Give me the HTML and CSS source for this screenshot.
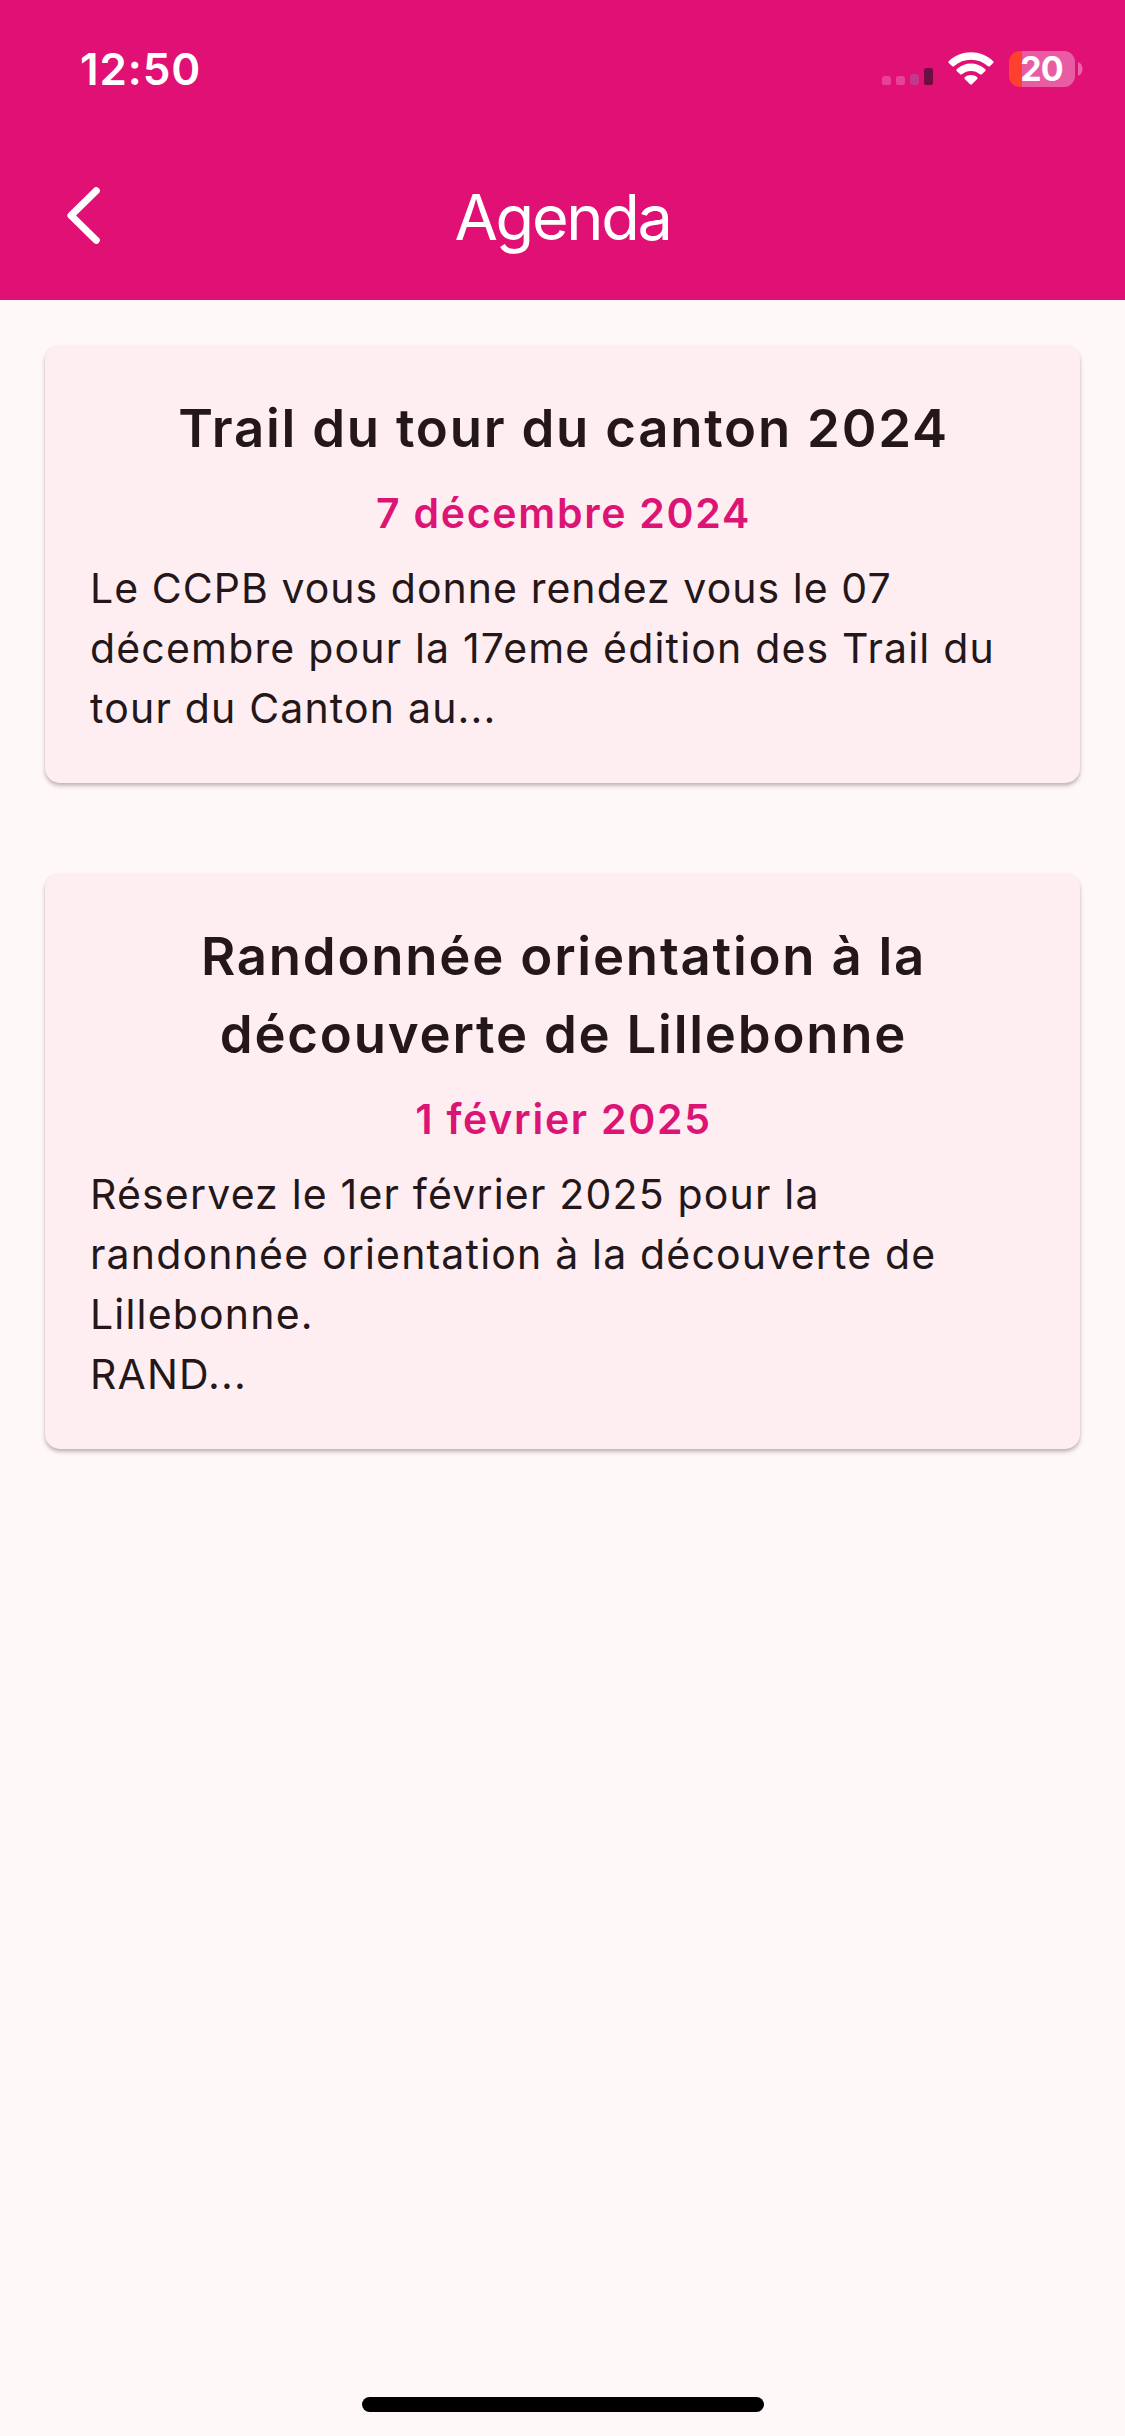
FILE: index.html
```
<!DOCTYPE html>
<html lang="fr">
<head>
<meta charset="utf-8">
<title>Agenda</title>
<link rel="stylesheet" href="styles.css">
</head>
<body>
<div class="screen">
  <header class="header">
    <div class="status">
      <span class="time">12:50</span>
      <div class="indicators">
        <svg class="signal" width="52" height="18" viewBox="0 0 52 18">
          <rect x="0" y="8" width="9" height="9" rx="2.6" fill="#ea409a"/>
          <rect x="14" y="8" width="9" height="9" rx="2.6" fill="#ea409a"/>
          <rect x="28" y="6" width="9" height="11" rx="3" fill="#c4388b"/>
          <rect x="42" y="0" width="9" height="17" rx="2.6" fill="#6b0f43"/>
        </svg>
        <svg class="wifi" width="46" height="34" viewBox="0 0 46 34" fill="#fff">
          <path d="M0.8 9.2Q0 10 .8 10.9L4.2 14.2Q5 15 5.9 14.2C15.5 5.6 30.500 5.600 40.100 14.200Q41 15 41.800 14.200L45.200 10.900Q46 10 45.200 9.200C32.800 -2.600 13.200 -2.600 .8 9.200Z"/>
          <path d="M8.700 17.200Q7.900 18 8.700 18.900L12.200 22.300Q13 23 13.900 22.300C19.200 17.800 26.800 17.800 32.100 22.300Q33 23 33.800 22.300L37.300 18.900Q38.100 18 37.300 17.200C29.200 9.500 16.800 9.500 8.700 17.200Z"/>
          <path d="M16.700 25.200Q16 26 16.700 26.900L22.100 32.300Q23 33.100 23.900 32.300L29.300 26.900Q30 26 29.300 25.200C25.700 22.200 20.300 22.200 16.700 25.200Z"/>
        </svg>
        <div class="battery"><span class="level">20</span></div>
        <svg class="cap" width="5" height="14" viewBox="0 0 5 14"><path d="M0 0Q4.500 2 4.500 7T0 14Z" fill="#ec62ab"/></svg>
      </div>
    </div>
    <div class="bar">
      <svg class="back" width="33" height="57" viewBox="0 0 33 57" fill="none" stroke="#fff" stroke-width="7.200" stroke-linecap="round" stroke-linejoin="round"><path d="M29.200 3.800L4 28.500L29.200 53.200"/></svg>
      <h1 class="heading">Agenda</h1>
    </div>
  </header>
  <main class="events">
    <article class="card">
      <h2 class="title">Trail du tour du canton 2024</h2>
      <p class="date">7 décembre 2024</p>
      <p class="text"><span class="tight">Le CCPB vous donne rendez vous le 07</span><br>décembre pour la 17eme édition des Trail du<br>tour du Canton au...</p>
    </article>
    <article class="card">
      <h2 class="title">Randonnée orientation à la<br>découverte de Lillebonne</h2>
      <p class="date">1 février 2025</p>
      <p class="text">Réservez le 1er février 2025 pour la<br>randonnée orientation à la découverte de<br>Lillebonne.<br>RAND...</p>
    </article>
  </main>
  <div class="home"></div>
</div>
</body>
</html>
```
FILE: styles.css
```
* { box-sizing: border-box; }
body { margin: 0; font-family: "Inter", "Liberation Sans", sans-serif; }
h1, h2, p { margin: 0; }
svg { display: block; flex: none; }

.screen {
  width: 1125px;
  height: 2436px;
  display: flex;
  flex-direction: column;
  background: #fff8f8;
  color: #23171a;
}

.header {
  height: 300px;
  background: #e11075;
  color: #fff;
}
.status {
  height: 132px;
  display: flex;
  align-items: flex-start;
  justify-content: space-between;
  padding: 51px 42px 0 80px;
}
.time {
  font-size: 44px;
  line-height: 36px;
  font-weight: 600;
  letter-spacing: 0.9px;
}
.indicators { display: flex; align-items: flex-start; }
.signal { margin-top: 17px; }
.wifi { margin: 1px 0 0 14px; }
.battery {
  width: 66px;
  height: 36px;
  margin-left: 15px;
  border-radius: 11px;
  background: linear-gradient(90deg, #ff402d 13px, #e95ca4 13px);
  text-align: center;
}
.level {
  display: block;
  font-size: 34px;
  line-height: 36px;
  font-weight: 700;
  letter-spacing: -0.8px;
  padding-right: 1px;
}
.cap { margin: 11px 0 0 3px; }

.bar {
  height: 168px;
  display: grid;
  grid-template-columns: 120px 1fr 120px;
  align-items: start;
  padding: 45px 0 0;
}
.back { margin: 10px 0 0 67px; }
.heading {
  text-align: center;
  font-size: 63px;
  line-height: 80px;
  font-weight: 370;
  letter-spacing: -2.3px;
}

.events {
  flex: 1;
  display: flex;
  flex-direction: column;
  gap: 90px;
  padding: 45px 45px 0;
}
.card {
  padding: 44px 45px 45px;
  border-radius: 15px;
  background: #ffeef1;
  box-shadow: 0 3px 4px rgba(60, 30, 40, .26), 0 2px 3px rgba(60, 30, 40, .08);
}
.title {
  padding-left: 2px;
  text-align: center;
  font-size: 52.7px;
  line-height: 78px;
  font-weight: 600;
  letter-spacing: 1.78px;
}
.date {
  margin: 16px 0 15px;
  padding-left: 2px;
  text-align: center;
  color: #db1475;
  font-size: 41px;
  line-height: 60px;
  font-weight: 600;
  letter-spacing: 1.72px;
}
.text {
  font-size: 41px;
  line-height: 60px;
  letter-spacing: 1.18px;
  white-space: nowrap;
}
.tight { letter-spacing: 1.04px; }

.home {
  width: 402px;
  height: 15px;
  margin: 0 auto 24px;
  border-radius: 8px;
  background: #000;
}
```
